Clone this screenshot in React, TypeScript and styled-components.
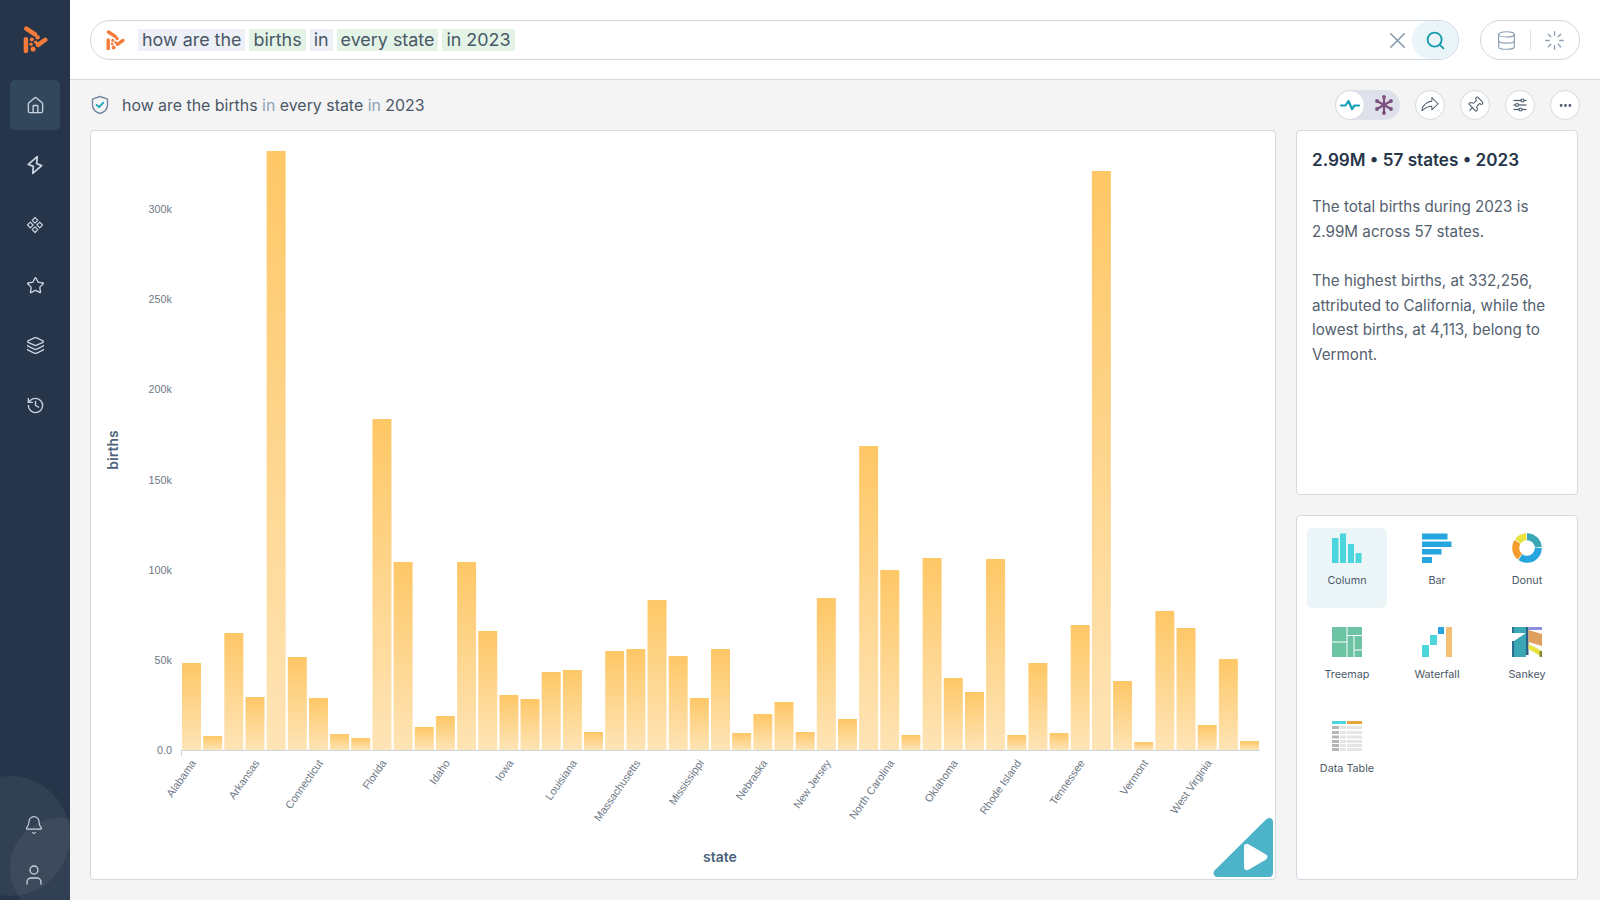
import React from 'react';
import styled, { createGlobalStyle } from 'styled-components';
import { House, Star, Layers, History, Bell, User, X, Search, Database, Loader, Ellipsis, Pin } from 'lucide-react';
import { PiShareFatLight } from 'react-icons/pi';

const GlobalStyle = createGlobalStyle`
  html, body { margin: 0; padding: 0; height: 100%; }
  body { font-family: Inter, "Liberation Sans", sans-serif; background: #f4f4f5; color: #3f4d5e; }
  * { box-sizing: border-box; }
`;

const Page = styled.div`
  display: flex;
  width: 1600px;
  height: 900px;
  overflow: hidden;
`;

const Sidebar = styled.aside`
  position: relative;
  flex: 0 0 70px;
  display: flex;
  flex-direction: column;
  align-items: center;
  background: #26354a;
  overflow: hidden;
`;

const LogoSlot = styled.div`
  height: 75px;
  display: flex;
  align-items: center;
  padding-top: 5px;
`;

const NavItem = styled.div<{ $active?: boolean }>`
  width: 50px;
  height: 50px;
  margin: 5px 0;
  display: flex;
  align-items: center;
  justify-content: center;
  border-radius: 5px;
  color: #c8d3df;
  background: ${(p) => (p.$active ? '#33475c' : 'transparent')};
`;

const Blob = styled.div<{ $x: number; $y: number; $r: number }>`
  position: absolute;
  left: ${(p) => p.$x - p.$r}px;
  top: ${(p) => p.$y - p.$r}px;
  width: ${(p) => p.$r * 2}px;
  height: ${(p) => p.$r * 2}px;
  border-radius: 50%;
  background: rgba(255, 255, 255, 0.055);
`;

const BottomNav = styled.div`
  position: relative;
  margin-top: auto;
  margin-right: 2px;
  display: flex;
  flex-direction: column;
`;

const BottomItem = styled.div`
  width: 66px;
  height: 50px;
  display: flex;
  align-items: center;
  justify-content: center;
  color: #c8d3df;
`;

const Main = styled.main`
  flex: 1;
  display: flex;
  flex-direction: column;
  min-width: 0;
`;

const Header = styled.header`
  height: 80px;
  flex: none;
  display: flex;
  align-items: flex-start;
  gap: 21px;
  padding: 20px 20px 0 20px;
  background: #fff;
  border-bottom: 1px solid #d3dae2;
`;

const SearchPill = styled.div`
  flex: 1;
  height: 40px;
  display: flex;
  align-items: center;
  border: 1px solid #cdd7e1;
  border-radius: 20px;
  padding-left: 15px;
`;

const Tokens = styled.div`
  display: flex;
  align-items: center;
  gap: 4px;
  margin-left: 13px;
`;

const Token = styled.span<{ $kind: 'plain' | 'match' }>`
  height: 22px;
  line-height: 22px;
  padding: 0 4px;
  font-size: 17.9px;
  color: #4a5766;
  background: ${(p) => (p.$kind === 'match' ? '#e3f4e6' : '#edf0f7')};
`;

const ClearButton = styled.div`
  margin-left: auto;
  width: 30px;
  display: flex;
  justify-content: center;
  color: #8397ab;
`;

const SearchButton = styled.div`
  width: 46px;
  height: 38px;
  display: flex;
  align-items: center;
  justify-content: center;
  border-radius: 19px;
  background: #e9f5f8;
  color: #1a9bb0;
`;

const SourcePill = styled.div`
  width: 100px;
  height: 40px;
  display: flex;
  align-items: center;
  justify-content: space-between;
  padding: 0 14px 0 15px;
  border: 1px solid #cdd7e1;
  border-radius: 20px;
  color: #8ba0b5;
`;

const SourceDivider = styled.span`
  width: 1px;
  height: 20px;
  background: #dde3ea;
`;

const TitleRow = styled.div`
  height: 50px;
  flex: none;
  display: flex;
  align-items: center;
  padding: 0 20px;
`;

const Title = styled.h1`
  margin: 0 0 0 12px;
  font-size: 15.9px;
  font-weight: 400;
  color: #4a5766;
`;

const Muted = styled.span`
  color: #8fa3b8;
`;

const Actions = styled.div`
  margin-left: auto;
  display: flex;
  align-items: center;
  gap: 15px;
`;

const RoundButton = styled.div`
  width: 30px;
  height: 30px;
  display: flex;
  align-items: center;
  justify-content: center;
  border-radius: 50%;
  background: #fff;
  border: 1px solid #d3dae2;
  color: #4a5a6b;
`;

const PinGlyph = styled(Pin)`
  transform: rotate(45deg);
`;

const Toggle = styled.div`
  width: 65px;
  height: 30px;
  display: flex;
  align-items: center;
  border-radius: 15px;
  background: #dfe1ea;
`;

const ToggleOn = styled(RoundButton)`
  color: #15a0b5;
`;

const ToggleOff = styled.div`
  flex: 1;
  display: flex;
  justify-content: center;
  color: #7b4f7d;
  padding-left: 3px;
`;

const Content = styled.div`
  flex: 1;
  display: flex;
  gap: 20px;
  padding: 0 22px 20px 20px;
  min-height: 0;
`;

const ChartCard = styled.section`
  position: relative;
  width: 1186px;
  background: #fff;
  border: 1px solid #d3dae2;
  border-radius: 4px;
  overflow: hidden;
`;

const ChartSvg = styled.svg`
  display: block;
`;

const TickLabel = styled.text`
  font-family: "Liberation Sans", Arial, sans-serif;
  font-size: 10.8px;
  fill: #6d7885;
`;

const AxisTitle = styled.text`
  font-family: Inter, "Liberation Sans", sans-serif;
  font-size: 14px;
  font-weight: 600;
  fill: #4b627a;
`;

const RunBadge = styled.svg`
  position: absolute;
  right: 1px;
  bottom: 1px;
`;

const SideColumn = styled.div`
  flex: 1;
  display: flex;
  flex-direction: column;
  gap: 20px;
  min-width: 0;
`;

const SummaryCard = styled.section`
  height: 365px;
  flex: none;
  padding: 18px 15px 0;
  background: #fff;
  border: 1px solid #d3dae2;
  border-radius: 4px;
`;

const SummaryTitle = styled.h2`
  margin: 0 0 24px;
  font-size: 17.1px;
  line-height: 22px;
  font-weight: 600;
  color: #26354a;
`;

const SummaryText = styled.p`
  margin: 0 0 25px;
  font-size: 15.2px;
  line-height: 24.6px;
  color: #54616f;
`;

const TypesCard = styled.section`
  flex: 1;
  display: grid;
  grid-template-columns: repeat(3, 80px);
  grid-auto-rows: 80px;
  column-gap: 10px;
  row-gap: 14px;
  align-content: start;
  padding: 12px 10px;
  background: #fff;
  border: 1px solid #d3dae2;
  border-radius: 4px;
`;

const TypeTile = styled.div<{ $active?: boolean }>`
  display: flex;
  flex-direction: column;
  align-items: center;
  padding-top: 5px;
  border-radius: 5px;
  background: ${(p) => (p.$active ? '#ecf6f9' : 'transparent')};
`;

const TypeLabel = styled.span`
  margin-top: 11px;
  font-size: 10.8px;
  line-height: 14px;
  color: #4a5867;
`;

const heights = [
  87, 14, 117, 53, 599, 93, 52, 16, 12, 331, 188, 23, 34, 188, 119, 55, 51, 78, 80, 18, 99, 101, 150, 94, 52, 101,
  17, 36, 48, 18, 152, 31, 304, 180, 15, 192, 72, 58, 191, 15, 87, 17, 125, 579, 69, 8, 139, 122, 25, 91, 9,
];

const stateLabels = [
  'Alabama', 'Arkansas', 'Connecticut', 'Florida', 'Idaho', 'Iowa', 'Louisiana', 'Massachusetts', 'Mississippi',
  'Nebraska', 'New Jersey', 'North Carolina', 'Oklahoma', 'Rhode Island', 'Tennessee', 'Vermont', 'West Virginia',
];

const yTicks = ['0.0', '50k', '100k', '150k', '200k', '250k', '300k'];

const BAR_START = 182;
const BAR_STEP = 21.16;
const BASELINE = 750;

function Logo({ size }: { size: number }) {
  return (
    <svg width={size} height={size * 1.1} viewBox="0 0 24 27" fill="#f47b3a">
      <g stroke="#f47b3a" strokeWidth="4.4" strokeLinecap="round">
        <line x1="3" y1="2.6" x2="11.5" y2="8.2" />
        <line x1="21.6" y1="13.5" x2="14.5" y2="18.5" />
        <line x1="2.6" y1="13" x2="2.6" y2="24.5" />
      </g>
      <circle cx="8.4" cy="13.2" r="2" />
      <circle cx="14" cy="11" r="2.2" />
      <circle cx="7.6" cy="18" r="1.7" />
      <circle cx="12.2" cy="16" r="1.7" />
      <circle cx="9.6" cy="22.6" r="2.5" />
    </svg>
  );
}

function BoltIcon() {
  return (
    <svg width="20" height="20" viewBox="0 0 18 18" fill="none" stroke="currentColor" strokeWidth="1.6" strokeLinejoin="round">
      <path d="M11 1.5L3 8.5l4.500 1.700L7 16.500l8-7-4.500-1.700z" />
    </svg>
  );
}

function DiamondsIcon() {
  return (
    <svg width="18" height="18" viewBox="0 0 18 18" fill="none" stroke="currentColor" strokeWidth="1.2" strokeLinejoin="round">
      <path d="M9 1.500l2.800 2.800L9 7.100 6.200 4.300z" />
      <path d="M4.300 6.200l2.800 2.800-2.800 2.800L1.500 9z" />
      <path d="M13.700 6.200l2.800 2.800-2.800 2.800L10.900 9z" />
      <path d="M9 10.900l2.800 2.800L9 16.500l-2.800-2.800z" />
    </svg>
  );
}

function ShieldIcon() {
  return (
    <svg width="20" height="20" viewBox="0 0 20 20" fill="none">
      <path d="M10 1.5l7.5 2.6v5.600c0 4.200-3 7.300-7.500 8.800-4.500-1.500-7.500-4.600-7.500-8.800V4.100z" stroke="#71889f" strokeWidth="1.4" strokeLinejoin="round" />
      <path d="M6.600 9.800l2.400 2.400 4.300-4.600" stroke="#14a3bb" strokeWidth="1.7" strokeLinecap="round" strokeLinejoin="round" />
    </svg>
  );
}

function PulseIcon() {
  return (
    <svg width="20" height="20" viewBox="0 0 20 20" fill="none" stroke="currentColor" strokeWidth="2.2" strokeLinecap="round" strokeLinejoin="round">
      <path d="M1 10.500h4.500L8.500 6l3.500 8 2.500-3.500H19" />
    </svg>
  );
}

function SnowIcon() {
  return (
    <svg width="20" height="20" viewBox="0 0 20 20" stroke="currentColor" strokeWidth="2.2" fill="currentColor">
      <line x1="10" y1="2" x2="10" y2="18" />
      <line x1="3" y1="6" x2="17" y2="14" />
      <line x1="17" y1="6" x2="3" y2="14" />
      <circle cx="10" cy="2" r="0.8" />
      <circle cx="10" cy="18" r="0.8" />
      <circle cx="3" cy="6" r="0.8" />
      <circle cx="17" cy="14" r="0.8" />
      <circle cx="17" cy="6" r="0.8" />
      <circle cx="3" cy="14" r="0.8" />
    </svg>
  );
}

function SlidersIcon() {
  return (
    <svg width="16" height="16" viewBox="0 0 16 16" fill="#fff" stroke="currentColor" strokeWidth="1.2">
      <line x1="1.500" y1="3.500" x2="14.500" y2="3.500" />
      <line x1="1.500" y1="8" x2="14.500" y2="8" />
      <line x1="1.500" y1="12.500" x2="14.500" y2="12.500" />
      <circle cx="10.500" cy="3.500" r="1.500" />
      <circle cx="5" cy="8" r="1.500" />
      <circle cx="8.500" cy="12.500" r="1.500" />
    </svg>
  );
}

function ColumnGlyph() {
  return (
    <svg width="30" height="30" viewBox="0 0 30 30" fill="#4dd5de">
      <rect x="0" y="5" width="6.5" height="25" />
      <rect x="8" y="0.5" width="6" height="29.5" />
      <rect x="16" y="11" width="6" height="19" />
      <rect x="23.5" y="20" width="6" height="10" />
    </svg>
  );
}

function BarGlyph() {
  return (
    <svg width="30" height="30" viewBox="0 0 30 30" fill="#27a5de">
      <rect x="0" y="0.5" width="25.5" height="6" />
      <rect x="0" y="8.5" width="29.5" height="5.5" />
      <rect x="0" y="16" width="19.5" height="5.5" />
      <rect x="0" y="24" width="10" height="6" />
    </svg>
  );
}

function DonutGlyph() {
  return (
    <svg width="30" height="30" viewBox="0 0 30 30" fill="none" strokeWidth="7">
      <g transform="rotate(-90 15 15)">
        <circle cx="15" cy="15" r="11.3" pathLength="100" stroke="#3ba7b5" strokeDasharray="24 76" strokeDashoffset="0" />
        <circle cx="15" cy="15" r="11.3" pathLength="100" stroke="#27a5de" strokeDasharray="35 65" strokeDashoffset="-25" />
        <circle cx="15" cy="15" r="11.3" pathLength="100" stroke="#f39c2c" strokeDasharray="23 77" strokeDashoffset="-61" />
        <circle cx="15" cy="15" r="11.3" pathLength="100" stroke="#e8e33f" strokeDasharray="14 86" strokeDashoffset="-85" />
      </g>
    </svg>
  );
}

function TreemapGlyph() {
  return (
    <svg width="30" height="30" viewBox="0 0 30 30" fill="#6cc4a4">
      <rect x="0" y="0" width="14.5" height="14.5" />
      <rect x="0" y="15.5" width="14.5" height="14.5" />
      <rect x="15.5" y="0" width="14.5" height="8" />
      <rect x="15.5" y="9" width="6" height="21" />
      <rect x="22.5" y="9" width="7.5" height="13.5" />
      <rect x="22.5" y="23.5" width="7.500" height="6.5" />
    </svg>
  );
}

function WaterfallGlyph() {
  return (
    <svg width="30" height="30" viewBox="0 0 30 30">
      <rect x="0" y="18" width="7" height="12" fill="#4dd5de" />
      <rect x="8" y="8" width="7" height="10" fill="#4dd5de" />
      <rect x="16" y="0" width="6" height="7" fill="#27a5de" />
      <rect x="24" y="0" width="6" height="30" fill="#f5bf74" />
    </svg>
  );
}

function SankeyGlyph() {
  return (
    <svg width="30" height="30" viewBox="0 0 30 30">
      <path d="M2 0h12v6H2z" fill="#3ba7b5" />
      <path d="M2 14L14 6v24H2z" fill="#3ba7b5" />
      <rect x="0" y="0" width="2" height="6" fill="#2d6f8c" />
      <rect x="0" y="14" width="2" height="16" fill="#2d6f8c" />
      <rect x="14" y="0" width="2.500" height="28" fill="#2d5f86" />
      <path d="M16.500 0H30v3H16.500z" fill="#8c8ce0" />
      <path d="M16.500 3L30 7v12l-13.500-4z" fill="#e0a060" />
      <path d="M16.500 17L30 24v6L16.500 22z" fill="#e8e33f" />
      <rect x="27.500" y="24" width="2.500" height="6" fill="#8a8a35" />
    </svg>
  );
}

function TableGlyph() {
  const rows = [5, 10, 14.5, 19, 23, 27];
  return (
    <svg width="30" height="30" viewBox="0 0 30 30">
      <rect x="0" y="0" width="14" height="3" fill="#4dd5de" />
      <rect x="15" y="0" width="15" height="3" fill="#e8a33a" />
      {rows.map((y) => (
        <g key={y}>
          <rect x="0" y={y} width="7" height="3" fill="#b5b5b5" />
          <rect x="8" y={y} width="6" height="3" fill="#e5e5e5" />
          <rect x="15" y={y} width="15" height="3" fill="#e5e5e5" />
        </g>
      ))}
    </svg>
  );
}

const chartTypes = [
  { name: 'Column', glyph: <ColumnGlyph />, active: true },
  { name: 'Bar', glyph: <BarGlyph /> },
  { name: 'Donut', glyph: <DonutGlyph /> },
  { name: 'Treemap', glyph: <TreemapGlyph /> },
  { name: 'Waterfall', glyph: <WaterfallGlyph /> },
  { name: 'Sankey', glyph: <SankeyGlyph /> },
  { name: 'Data Table', glyph: <TableGlyph /> },
];

function BirthsChart() {
  return (
    <ChartSvg width="1184" height="748" viewBox="91 131 1184 748">
      <defs>
        <linearGradient id="barFill" x1="0" y1="0" x2="0" y2="1">
          <stop offset="0" stopColor="#fec766" />
          <stop offset="1" stopColor="#fee4b6" />
        </linearGradient>
      </defs>
      {heights.map((h, i) => (
        <rect key={i} x={BAR_START + i * BAR_STEP} y={BASELINE - h} width="19" height={h} fill="url(#barFill)" />
      ))}
      <line x1="182" y1="750.5" x2="1260" y2="750.5" stroke="#ccd6e0" />
      <line x1="181.5" y1="750" x2="181.5" y2="756" stroke="#ccd6e0" />
      {yTicks.map((t, i) => (
        <TickLabel key={t} x="172" y={754 - i * 90.15} textAnchor="end">
          {t}
        </TickLabel>
      ))}
      {stateLabels.map((s, i) => {
        const cx = BAR_START + 9.5 + i * 3 * BAR_STEP + 5;
        return (
          <TickLabel key={s} x={cx} y="763" textAnchor="end" transform={`rotate(-55 ${cx} 763)`}>
            {s}
          </TickLabel>
        );
      })}
      <AxisTitle x="720" y="862" textAnchor="middle">state</AxisTitle>
      <AxisTitle x="118" y="450" textAnchor="middle" transform="rotate(-90 118 450)">births</AxisTitle>
    </ChartSvg>
  );
}

export default function App() {
  return (
    <Page>
      <GlobalStyle />
      <Sidebar>
        <Blob $x={10} $y={836} $r={60} />
        <Blob $x={60} $y={868} $r={50} />
        <LogoSlot>
          <Logo size={25} />
        </LogoSlot>
        <NavItem $active><House size={19} strokeWidth={1.7} /></NavItem>
        <NavItem><BoltIcon /></NavItem>
        <NavItem><DiamondsIcon /></NavItem>
        <NavItem><Star size={19} strokeWidth={1.7} /></NavItem>
        <NavItem><Layers size={19} strokeWidth={1.7} /></NavItem>
        <NavItem><History size={19} strokeWidth={1.7} /></NavItem>
        <BottomNav>
          <BottomItem><Bell size={20} strokeWidth={1.4} /></BottomItem>
          <BottomItem><User size={24} strokeWidth={1.3} /></BottomItem>
        </BottomNav>
      </Sidebar>
      <Main>
        <Header>
          <SearchPill>
            <Logo size={19} />
            <Tokens>
              <Token $kind="plain">how are the</Token>
              <Token $kind="match">births</Token>
              <Token $kind="plain">in</Token>
              <Token $kind="match">every state</Token>
              <Token $kind="match">in 2023</Token>
            </Tokens>
            <ClearButton><X size={27} strokeWidth={1.3} /></ClearButton>
            <SearchButton><Search size={21} strokeWidth={2.1} /></SearchButton>
          </SearchPill>
          <SourcePill>
            <Database size={21} strokeWidth={1.3} />
            <SourceDivider />
            <Loader size={21} strokeWidth={1.6} />
          </SourcePill>
        </Header>
        <TitleRow>
          <ShieldIcon />
          <Title>
            how are the births <Muted>in</Muted> every state <Muted>in</Muted> 2023
          </Title>
          <Actions>
            <Toggle>
              <ToggleOn><PulseIcon /></ToggleOn>
              <ToggleOff><SnowIcon /></ToggleOff>
            </Toggle>
            <RoundButton><PiShareFatLight size={20} /></RoundButton>
            <RoundButton><PinGlyph size={18} strokeWidth={1.4} /></RoundButton>
            <RoundButton><SlidersIcon /></RoundButton>
            <RoundButton><Ellipsis size={15} strokeWidth={2.6} /></RoundButton>
          </Actions>
        </TitleRow>
        <Content>
          <ChartCard>
            <BirthsChart />
            <RunBadge width="61" height="61" viewBox="0 0 61 61">
              <path d="M53 2.500c3-3 7-1.500 7 2.500v51c0 2.500-2 4-4 4H5c-4 0-6-4-3-7z" fill="#4db3c9" />
              <path d="M31 30c0-3 2.500-4 5-2.500l17 10c2 1 2 3.500 0 5l-17 10c-2.500 1.500-5 .5-5-2.500z" fill="#fff" />
            </RunBadge>
          </ChartCard>
          <SideColumn>
            <SummaryCard>
              <SummaryTitle>2.99M • 57 states • 2023</SummaryTitle>
              <SummaryText>
                The total births during 2023 is
                <br />
                2.99M across 57 states.
              </SummaryText>
              <SummaryText>
                The highest births, at 332,256,
                <br />
                attributed to California, while the
                <br />
                lowest births, at 4,113, belong to
                <br />
                Vermont.
              </SummaryText>
            </SummaryCard>
            <TypesCard>
              {chartTypes.map((t) => (
                <TypeTile key={t.name} $active={t.active}>
                  {t.glyph}
                  <TypeLabel>{t.name}</TypeLabel>
                </TypeTile>
              ))}
            </TypesCard>
          </SideColumn>
        </Content>
      </Main>
    </Page>
  );
}
